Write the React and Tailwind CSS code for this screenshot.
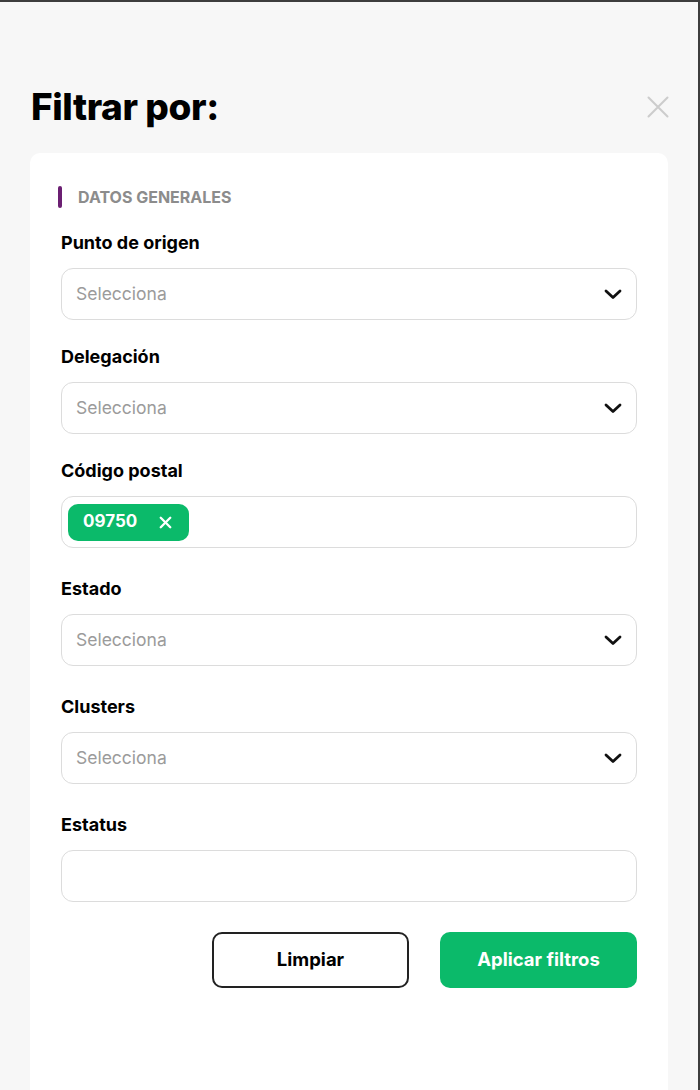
import { X } from 'lucide-react'

const font = { fontFamily: 'Inter, "Noto Sans", sans-serif' }

function Chevron() {
  return (
    <svg width="20" height="12" viewBox="0 0 20 12" fill="none" stroke="#111" strokeWidth="2.8" strokeLinecap="round" strokeLinejoin="round">
      <path d="M3 3l7 6.5L17 3" />
    </svg>
  )
}

function SelectField({ label, className = '' }) {
  return (
    <div className={className}>
      <label className="block text-[18px] font-bold text-black leading-[22px]">{label}</label>
      <div className="mt-[14px] h-[52px] rounded-[12px] border border-[#dcdcdc] bg-white flex items-center justify-between pl-[14px] pr-[13px]">
        <span className="text-[17.5px] text-[#9b9b9b]">Selecciona</span>
        <Chevron />
      </div>
    </div>
  )
}

export default function App() {
  return (
    <div style={font} className="h-[1090px] bg-[#f7f7f7] border-t-2 border-r-2 border-[#3d3d3d] flex flex-col overflow-hidden">
      <div className="flex items-center justify-between pl-[31px] pr-[29px] pt-[85px] pb-[26px]">
        <h1 className="text-[37px] leading-[40px] font-extrabold tracking-[-0.4px] text-black">Filtrar por:</h1>
        <svg width="22" height="22" viewBox="0 0 22 22" fill="none" stroke="#cccccc" strokeWidth="2" strokeLinecap="round">
          <path d="M1.5 1.5l19 19M20.5 1.5l-19 19" />
        </svg>
      </div>

      <div className="ml-[30px] mr-[30px] flex-1 bg-white rounded-t-[10px] px-[31px] pt-[32px]">
        <div className="flex items-center -ml-[3px]">
          <span className="w-[4px] h-[22px] rounded-full bg-[#6b1f72]" />
          <span className="ml-[16px] text-[16px] font-bold text-[#8c8c8c]">DATOS GENERALES</span>
        </div>

        <SelectField label="Punto de origen" className="mt-[23px]" />
        <SelectField label="Delegación" className="mt-[26px]" />

        <div className="mt-[26px]">
          <label className="block text-[18px] font-bold text-black leading-[22px]">Código postal</label>
          <div className="mt-[14px] h-[52px] rounded-[12px] border border-[#dcdcdc] bg-white flex items-center pl-[6px]">
            <span className="h-[37px] w-[121px] rounded-[10px] bg-[#0bba6a] flex items-center pl-[15px] pr-[14px] justify-between text-white">
              <span className="text-[17px] font-bold">09750</span>
              <X size={19} strokeWidth={3} />
            </span>
          </div>
        </div>

        <SelectField label="Estado" className="mt-[30px]" />
        <SelectField label="Clusters" className="mt-[30px]" />

        <div className="mt-[30px]">
          <label className="block text-[18px] font-bold text-black leading-[22px]">Estatus</label>
          <div className="mt-[14px] h-[52px] rounded-[12px] border border-[#dcdcdc] bg-white" />
        </div>

        <div className="mt-[30px] flex justify-end gap-[31px]">
          <button className="w-[197px] h-[56px] rounded-[10px] border-2 border-[#222] bg-white text-[18.5px] font-bold text-black">
            Limpiar
          </button>
          <button className="w-[197px] h-[56px] rounded-[10px] bg-[#0bba6a] text-[18.5px] font-bold text-white">
            Aplicar filtros
          </button>
        </div>
      </div>
    </div>
  )
}
